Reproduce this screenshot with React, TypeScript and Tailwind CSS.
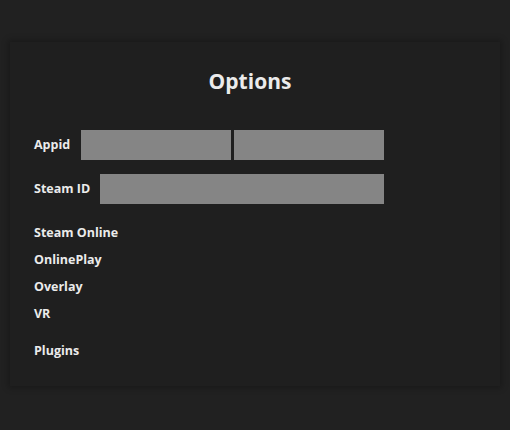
export default function App() {
  return (
    <div className="w-[510px] h-[430px] bg-[#212121] pt-[42px] px-[10px]" style={{ fontFamily: '"Open Sans", sans-serif' }}>
      <div className="w-[490px] h-[344px] bg-[#1f1f1f] shadow-[0_0_6px_2px_rgba(0,0,0,0.25)] pt-[25px] text-[#ebebeb]">
        <h1 className="text-[21px] font-bold text-center leading-[28px] mb-[35px] pr-[10px]">Options</h1>
        <div className="px-[24px]">
          <div className="flex items-center h-[30px]">
            <span className="text-[12.5px] font-bold w-[47px]">Appid</span>
            <div className="w-[150px] h-[30px] bg-[#858585]" />
            <div className="w-[150px] h-[30px] bg-[#858585] ml-[3px]" />
          </div>
          <div className="flex items-center h-[30px] mt-[14px]">
            <span className="text-[12.5px] font-bold w-[66px]">Steam ID</span>
            <div className="w-[284px] h-[30px] bg-[#858585]" />
          </div>
          <div className="flex flex-col text-[12.5px] font-bold leading-[18px] mt-[20px] gap-[9px]">
            <span>Steam Online</span>
            <span>OnlinePlay</span>
            <span>Overlay</span>
            <span>VR</span>
            <span className="mt-[10px]">Plugins</span>
          </div>
        </div>
      </div>
    </div>
  );
}
